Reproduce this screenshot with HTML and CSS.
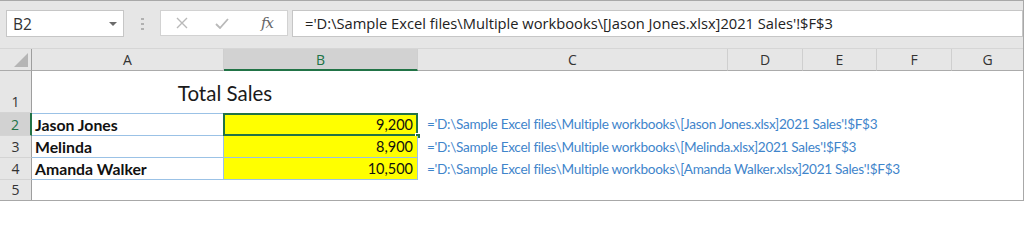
FILE: index.html
```html
<!DOCTYPE html>
<html>
<head>
<meta charset="utf-8">
<link rel="stylesheet" href="styles.css">
</head>
<body>
<div class="frame">
  <div class="toolbar">
    <div class="namebox"><span class="ref">B2</span><svg class="caret" width="8" height="5" viewBox="0 0 8 5"><path d="M0 0H8L4 4Z" fill="#6b6b6b"/></svg></div>
    <div class="grip"><i></i><i></i><i></i></div>
    <div class="fxbox">
      <svg class="ic" width="12" height="12" viewBox="0 0 12 12"><path d="M1 1L11 11M11 1L1 11" stroke="#b9b9b9" stroke-width="1.4" fill="none"/></svg>
      <svg class="ic" width="14" height="11" viewBox="0 0 14 11"><path d="M1 6L5 10L13 1" stroke="#b9b9b9" stroke-width="1.8" fill="none"/></svg>
      <span class="fx">fx</span>
    </div>
    <div class="formula">='D:\Sample Excel files\Multiple workbooks\[Jason Jones.xlsx]2021 Sales'!$F$3</div>
  </div>
  <div class="sheet">
    <div class="corner"><svg width="14" height="14" viewBox="0 0 14 14"><path d="M14 0V14H0Z" fill="#b5b5b5"/></svg></div>
    <div class="ch">A</div>
    <div class="ch sel">B</div>
    <div class="ch">C</div>
    <div class="ch">D</div>
    <div class="ch">E</div>
    <div class="ch">F</div>
    <div class="ch last">G</div>

    <div class="rh">1</div>
    <div class="title">Total Sales</div>
    <div class="c span5"></div>

    <div class="rh sel">2</div>
    <div class="c name top">Jason Jones</div>
    <div class="c num top active">9,200<span class="selbox"></span><span class="handle"></span></div>
    <div class="c link span5">='D:\Sample Excel files\Multiple workbooks\[Jason Jones.xlsx]2021 Sales'!$F$3</div>

    <div class="rh">3</div>
    <div class="c name">Melinda</div>
    <div class="c num">8,900</div>
    <div class="c link span5">='D:\Sample Excel files\Multiple workbooks\[Melinda.xlsx]2021 Sales'!$F$3</div>

    <div class="rh">4</div>
    <div class="c name">Amanda Walker</div>
    <div class="c num">10,500</div>
    <div class="c link span5">='D:\Sample Excel files\Multiple workbooks\[Amanda Walker.xlsx]2021 Sales'!$F$3</div>

    <div class="rh end">5</div>
    <div class="c span7"></div>
  </div>
</div>
</body>
</html>
```

FILE: styles.css
```css
* { box-sizing: border-box; }
html, body { margin: 0; padding: 0; background: #ffffff; }
.frame {
  width: 1024px;
  height: 201px;
  border-top: 1px solid #a8a8a8;
  border-right: 1px solid #a8a8a8;
  border-bottom: 1px solid #a8a8a8;
  background: #ffffff;
  overflow: hidden;
  font-family: "Open Sans", "Noto Sans", sans-serif;
}
.toolbar {
  height: 48px;
  background: #e6e6e6;
  display: flex;
  align-items: flex-start;
  padding-top: 9px;
  border-bottom: 1px solid #d6d6d6;
}
.namebox {
  margin-left: 6px;
  width: 118px;
  height: 27px;
  background: #fff;
  border: 1px solid #c6c6c6;
  display: flex;
  align-items: center;
  justify-content: space-between;
  padding: 0 6px 0 6px;
  font-size: 15.5px;
  color: #333;
}
.namebox .caret { margin-top: 1px; }
.grip {
  margin-left: 17px;
  width: 3px;
  height: 27px;
  display: flex;
  flex-direction: column;
  justify-content: center;
  gap: 3px;
}
.grip i { display: block; width: 3px; height: 2px; background: #b1b1b1; }
.fxbox {
  margin-left: 16px;
  width: 128px;
  height: 26px;
  background: #fff;
  border: 1px solid #d2d2d2;
  display: flex;
  align-items: center;
  padding-left: 15px;
}
.fxbox .ic:nth-child(2) { margin-left: 27px; }
.fx {
  margin-left: 32px;
  font-family: "DejaVu Serif", "Liberation Serif", serif;
  font-style: italic;
  font-size: 15px;
  color: #666;
  letter-spacing: -1px;
}
.formula {
  margin-left: 4px;
  flex: 1;
  height: 27px;
  background: #fff;
  border: 1px solid #c6c6c6;
  padding-left: 12px;
  font-size: 14.7px;
  line-height: 24px;
  color: #222;
  white-space: nowrap;
  overflow: hidden;
}
.sheet {
  display: grid;
  grid-template-columns: 32px 192px 194px 310px 75px 74px 75px 1fr;
  grid-template-rows: 22px 42px 23px 22px 22px 1fr;
  height: 151px;
  font-family: "Lato", "Open Sans", sans-serif;
}
.corner {
  background: #e6e6e6;
  border-right: 1px solid #9e9e9e;
  border-bottom: 1px solid #ababab;
  display: flex;
  align-items: flex-end;
  justify-content: flex-end;
  padding: 0 3px 3px 0;
}
.ch {
  background: #e6e6e6;
  border-right: 1px solid #cfcfcf;
  border-bottom: 1px solid #ababab;
  font-family: "Open Sans", "Noto Sans", sans-serif;
  font-size: 14px;
  color: #333;
  text-align: center;
  line-height: 22px;
}
.ch.last { border-right: none; }
.ch.sel {
  background: #d2d2d2;
  color: #217346;
  border-bottom: 2px solid #217346;
}
.rh {
  background: #e6e6e6;
  border-right: 1px solid #9e9e9e;
  border-bottom: 1px solid #d4d4d4;
  font-family: "Open Sans", "Noto Sans", sans-serif;
  font-size: 14px;
  color: #333;
  text-align: center;
  display: flex;
  align-items: flex-end;
  justify-content: center;
  line-height: 20px;
}
.rh.sel {
  background: #d2d2d2;
  color: #217346;
  border-right: 2px solid #217346;
}
.rh.end { border-bottom: none; }
.c { background: #fff; white-space: nowrap; }
.span5 { grid-column: span 5; }
.span7 { grid-column: span 7; }
.title {
  grid-column: span 2;
  font-size: 20.5px;
  color: #1a1a1a;
  text-align: center;
  display: flex;
  align-items: flex-end;
  justify-content: center;
  padding-bottom: 8px;
  padding-left: 0;
}
.name, .num {
  border-right: 1px solid #9bc2e6;
  border-bottom: 1px solid #9bc2e6;
  line-height: 21px;
  color: #111;
}
.top { border-top: 1px solid #9bc2e6; }
.name { font-weight: 700; padding-left: 3px; font-size: 15.8px; }
.num {
  background: #ffff00;
  text-align: right;
  padding-right: 4px;
  position: relative;
  font-size: 14.5px;
}
.active .selbox {
  position: absolute;
  left: -1px;
  top: -1px;
  right: -1px;
  bottom: -1px;
  border: 2px solid #217346;
}
.active .handle {
  position: absolute;
  right: -4px;
  bottom: -4px;
  width: 6px;
  height: 6px;
  background: #217346;
  border: 1px solid #fff;
}
.link {
  font-size: 13.6px;
  letter-spacing: -0.3px;
  color: #3f85cb;
  padding-left: 9px;
  line-height: 22px;
}
```
